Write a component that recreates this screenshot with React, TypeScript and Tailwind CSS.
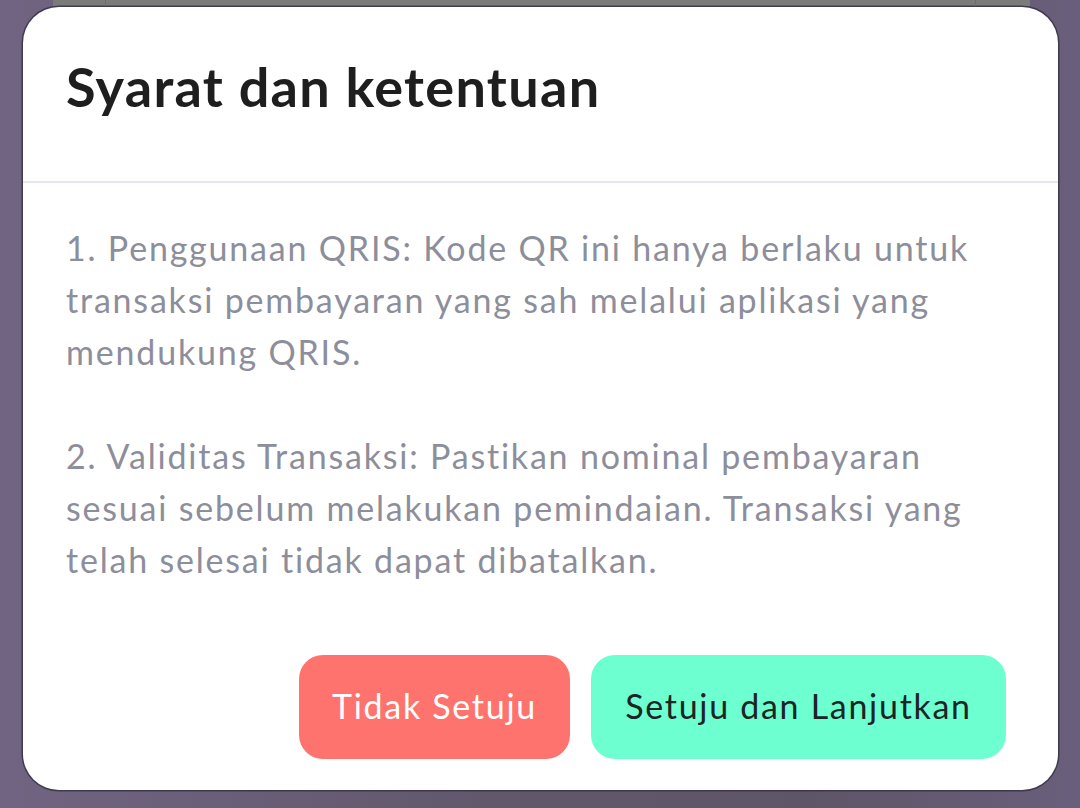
const terms = [
  [
    "1. Penggunaan QRIS: Kode QR ini hanya berlaku untuk",
    "transaksi pembayaran yang sah melalui aplikasi yang",
    "mendukung QRIS.",
  ],
  [
    "2. Validitas Transaksi: Pastikan nominal pembayaran",
    "sesuai sebelum melakukan pemindaian. Transaksi yang",
    "telah selesai tidak dapat dibatalkan.",
  ],
];

export default function App() {
  return (
    <div className="h-[808px] w-full overflow-hidden bg-[linear-gradient(90deg,#706482_0%,#62586c_45%,#5f5568_75%,#695f7c_100%)] font-['Lato',sans-serif]">
      {/* dimmed page behind the dialog */}
      <div className="ml-[53px] flex h-[7px] w-[977px] border-b border-[#6a6a6a] bg-[#7b7b7b]">
        <div className="w-[53px] border-r border-[#6c6c6c]" />
        <div className="w-[870px] border-r border-[#6c6c6c]" />
      </div>

      <div className="ml-[23px] flex h-[783px] w-[1035px] flex-col rounded-[36px] bg-white shadow-[0_0_0_1.5px_rgba(58,50,68,0.85)]">
        <div className="h-[176px] border-b-2 border-[#e3e6eb] px-[43px] pt-[48px]">
          <h1 className="text-[54px] font-bold leading-[64px] tracking-[1.3px] text-[#1e1e1e]">
            Syarat dan ketentuan
          </h1>
        </div>

        <div className="flex flex-1 flex-col px-[43px] pt-[39px]">
          <div className="flex flex-col gap-[52px] text-[34px] leading-[52px] tracking-[1.8px] text-[#8d8e9b]">
            {terms.map((lines, i) => (
              <p key={i}>
                {lines.map((l, j) => (
                  <span key={j} className="block whitespace-nowrap">
                    {l}
                  </span>
                ))}
              </p>
            ))}
          </div>

          <div className="mt-auto mb-[31px] flex justify-end gap-[21px] pr-[9px]">
            <button className="h-[104px] w-[271px] rounded-[24px] bg-[#ff736e] pb-[4px] text-[34px] tracking-[1.7px] text-white">
              Tidak Setuju
            </button>
            <button className="h-[104px] w-[415px] rounded-[24px] bg-[#6dffcf] pb-[4px] text-[34px] tracking-[1.7px] text-[#1c2424]">
              Setuju dan Lanjutkan
            </button>
          </div>
        </div>
      </div>
    </div>
  );
}
